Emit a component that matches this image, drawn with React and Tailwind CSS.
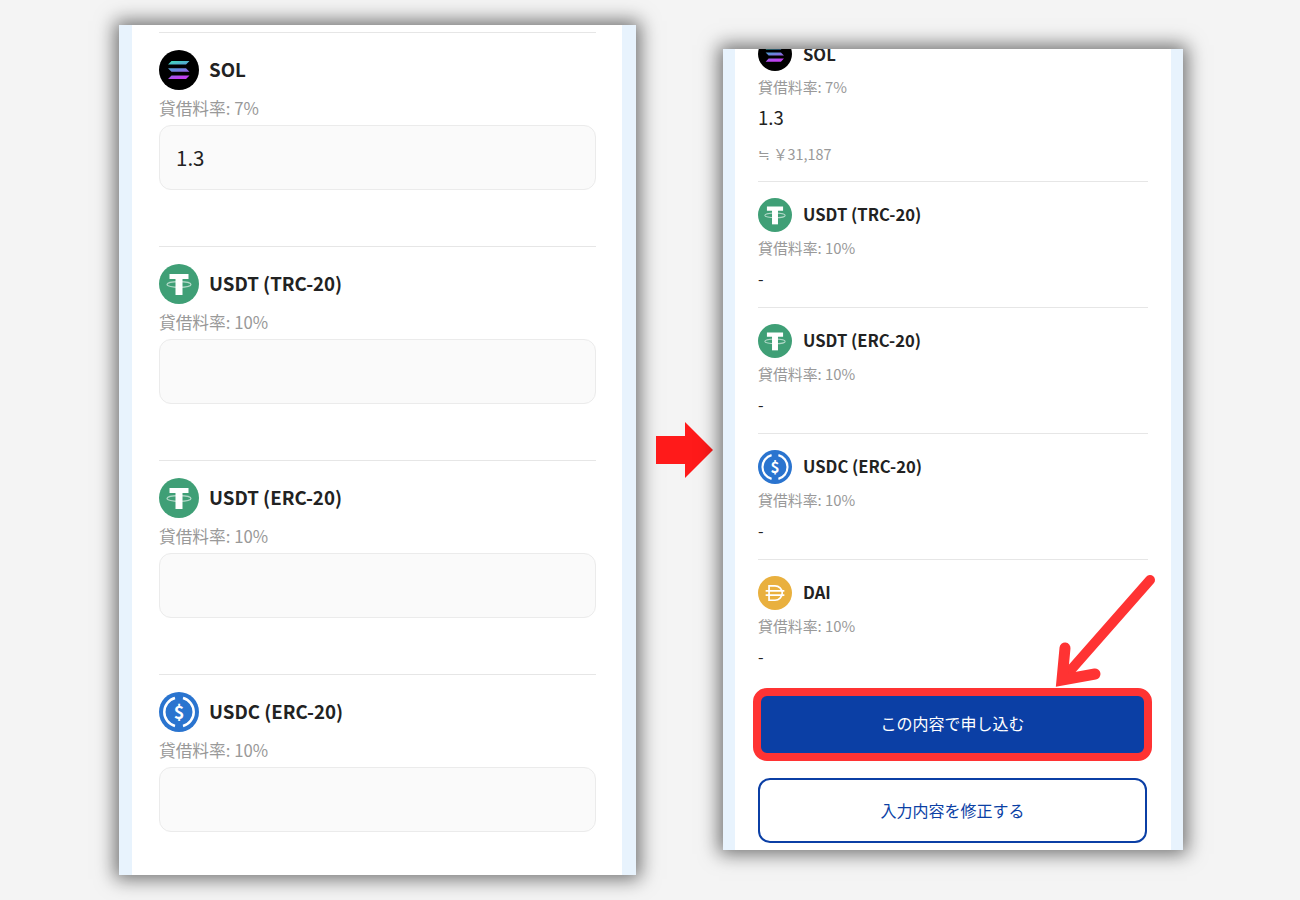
import React from 'react';

const font = { fontFamily: '"Noto Sans CJK JP", "Noto Sans", sans-serif' };

const SolIcon = ({ className }) => (
  <svg viewBox="0 0 40 40" className={className}>
    <defs>
      <linearGradient id="sol" x1="0" y1="0" x2="0.3" y2="1">
        <stop offset="0" stopColor="#3fe0b8" />
        <stop offset="0.5" stopColor="#5b8fd8" />
        <stop offset="1" stopColor="#c040f0" />
      </linearGradient>
    </defs>
    <circle cx="20" cy="20" r="20" fill="#000" />
    <path
      d="M12.5 11h18l-3.5 3.6H9zM9 18.2h18l3.5 3.6h-18zM12.5 25.4h18L27 29H9z"
      fill="url(#sol)"
    />
  </svg>
);

const TetherIcon = ({ className }) => (
  <svg viewBox="0 0 40 40" className={className}>
    <circle cx="20" cy="20" r="20" fill="#3f9f76" />
    <rect x="10.500" y="10" width="19" height="5" fill="#fff" />
    <rect x="16.500" y="12" width="7" height="19" fill="#fff" />
    <ellipse cx="20" cy="20.500" rx="12" ry="2.800" fill="none" stroke="#fff" strokeWidth="1.200" opacity="0.6" />
  </svg>
);

const UsdcIcon = ({ className }) => (
  <svg viewBox="0 0 40 40" className={className}>
    <circle cx="20" cy="20" r="20" fill="#2a74cf" />
    <path d="M16 6a14.500 14.500 0 0 0 0 28" fill="none" stroke="#fff" strokeWidth="2.500" />
    <path d="M24 6a14.500 14.500 0 0 1 0 28" fill="none" stroke="#fff" strokeWidth="2.500" />
    <text x="20" y="26.500" textAnchor="middle" fontSize="18" fontWeight="700" fill="#fff" style={font}>$</text>
  </svg>
);

const DaiIcon = ({ className }) => (
  <svg viewBox="0 0 40 40" className={className}>
    <circle cx="20" cy="20" r="20" fill="#e9b03e" />
    <path d="M13 11.500h7a8.500 8.500 0 0 1 0 17h-7z" fill="none" stroke="#fff" strokeWidth="2" />
    <path d="M9 17.500h22M9 22.500h22" stroke="#fff" strokeWidth="2" />
  </svg>
);

const leftRows = [
  { name: 'SOL', rate: '7%', Icon: SolIcon, value: '1.3' },
  { name: 'USDT (TRC-20)', rate: '10%', Icon: TetherIcon, value: '' },
  { name: 'USDT (ERC-20)', rate: '10%', Icon: TetherIcon, value: '' },
  { name: 'USDC (ERC-20)', rate: '10%', Icon: UsdcIcon, value: '' },
];

const rightRows = [
  { name: 'USDT (TRC-20)', Icon: TetherIcon },
  { name: 'USDT (ERC-20)', Icon: TetherIcon },
  { name: 'USDC (ERC-20)', Icon: UsdcIcon },
  { name: 'DAI', Icon: DaiIcon },
];

export default function App() {
  return (
    <div style={font} className="w-[1300px] h-[900px] bg-[#f4f4f4] flex items-start pl-[119px] pt-[25px] overflow-hidden">

      {/* LEFT PANEL - input form */}
      <div className="flex w-[517px] h-[850px] overflow-hidden shrink-0 shadow-[0_0_18px_4px_rgba(0,0,0,0.55)]">
        <div className="w-[13px] shrink-0 bg-[#e8f3fd]" />
        <div className="flex-1 min-w-0 bg-white pl-[27px] pr-[26px] pt-[7px]">
          {leftRows.map(({ name, rate, Icon, value }) => (
            <div key={name} className="h-[214px] border-t border-[#e6e6e6] pt-[17px]">
              <div className="flex items-center gap-[10px]">
                <Icon className="w-[40px] h-[40px] shrink-0" />
                <span className="mb-[2px] text-[18.700px] font-bold text-[#222]">{name}</span>
              </div>
              <p className="mt-[6px] text-[16.700px] leading-6 text-[#999]">貸借料率: {rate}</p>
              <input
                readOnly
                value={value}
                style={font}
                className="mt-[5px] block w-full h-[65px] px-[16px] pb-[2px] rounded-[12px] border border-[#ebebeb] bg-[#fafafa] text-[20.500px] text-[#222]"
              />
            </div>
          ))}
        </div>
        <div className="w-[14px] shrink-0 bg-[#e8f3fd]" />
      </div>

      {/* Arrow between the panels */}
      <svg viewBox="0 0 57 56" className="w-[57px] h-[56px] ml-[20px] mt-[397px] shrink-0">
        <path d="M0 14h29V0l28 28-28 28V42H0z" fill="#ff1a1a" />
      </svg>

      {/* RIGHT PANEL - confirmation */}
      <div className="relative flex w-[460px] h-[801px] ml-[10px] mt-[24px] overflow-hidden shrink-0 shadow-[0_0_18px_4px_rgba(0,0,0,0.55)]">
        <div className="w-[12px] shrink-0 bg-[#e8f3fd]" />
        <div className="flex-1 min-w-0 bg-white pl-[23px] pr-[23px]">
          <div className="h-[144px] -mt-[12px]">
            <div className="flex items-center gap-[11px]">
              <SolIcon className="w-[34px] h-[34px] shrink-0" />
              <span className="text-[16.600px] font-bold text-[#222]">SOL</span>
            </div>
            <p className="mt-[4px] text-[14.900px] leading-6 text-[#999]">貸借料率: 7%</p>
            <p className="mt-[6px] text-[18.500px] leading-6 text-[#222]">1.3</p>
            <p className="mt-[13px] text-[14.400px] leading-6 text-[#999]">≒ ￥31,187</p>
          </div>

          {rightRows.map(({ name, Icon }) => (
            <div key={name} className="h-[126px] border-t border-[#e6e6e6] pt-[16px]">
              <div className="flex items-center gap-[11px]">
                <Icon className="w-[34px] h-[34px] shrink-0" />
                <span className="mb-[2px] text-[16.600px] font-bold text-[#222]">{name}</span>
              </div>
              <p className="mt-[4px] text-[14.900px] leading-6 text-[#999]">貸借料率: 10%</p>
              <p className="mt-[6px] text-[16px] leading-6 text-[#222]">-</p>
            </div>
          ))}

          <button style={font} className="block mt-[3px] -ml-[5px] w-[399px] h-[73px] pb-[3px] rounded-[14px] border-[8px] border-[#ff3333] bg-[#0b3fa5] text-[16px] text-white">
            この内容で申し込む
          </button>
          <button style={font} className="block mt-[17px] w-[389px] h-[65px] pb-[2px] rounded-[12px] border-2 border-[#0b3fa5] bg-white text-[16px] text-[#0b3fa5]">
            入力内容を修正する
          </button>
        </div>
        <div className="w-[12px] shrink-0 bg-[#e8f3fd]" />

        {/* Red callout arrow, lies over the button */}
        <svg viewBox="0 0 105 122" className="absolute left-[331px] top-[523px] w-[105px] h-[122px]">
          <path d="M96 8 8 108" stroke="#ff3333" strokeWidth="10" strokeLinecap="round" fill="none" />
          <path d="M11 76 8 108 41 102" stroke="#ff3333" strokeWidth="11" strokeLinecap="round" strokeLinejoin="miter" fill="none" />
        </svg>
      </div>
    </div>
  );
}
